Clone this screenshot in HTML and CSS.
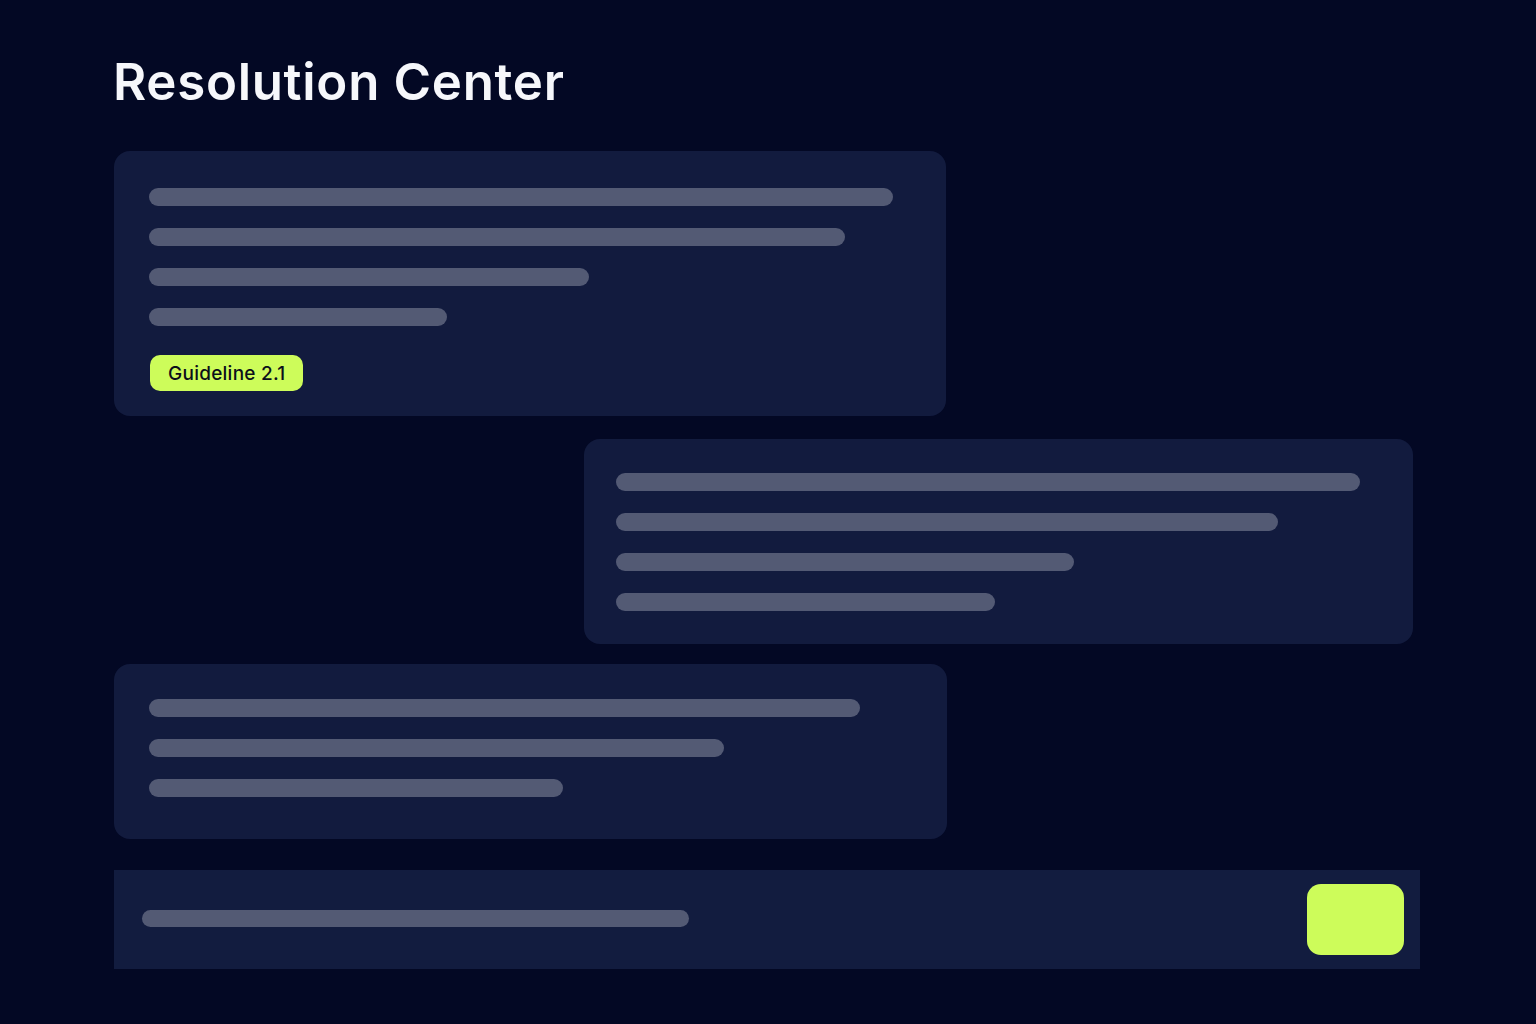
FILE: index.html
```html
<!DOCTYPE html>
<html>
<head>
<meta charset="utf-8">
<link rel="stylesheet" href="styles.css">
</head>
<body>
<main class="page">
  <h1 class="title">Resolution Center</h1>
  <section class="card card-a">
    <div class="bars">
      <div class="bar" style="width:744px"></div>
      <div class="bar" style="width:696px"></div>
      <div class="bar" style="width:440px"></div>
      <div class="bar" style="width:298px"></div>
    </div>
    <span class="badge">Guideline 2.1</span>
  </section>
  <section class="card card-b">
    <div class="bars">
      <div class="bar" style="width:744px"></div>
      <div class="bar" style="width:662px"></div>
      <div class="bar" style="width:458px"></div>
      <div class="bar" style="width:379px"></div>
    </div>
  </section>
  <section class="card card-c">
    <div class="bars">
      <div class="bar" style="width:711px"></div>
      <div class="bar" style="width:575px"></div>
      <div class="bar" style="width:414px"></div>
    </div>
  </section>
  <footer class="composer">
    <div class="bar bar-input" style="width:547px"></div>
    <button class="send" type="button" aria-label="Send"></button>
  </footer>
</main>
</body>
</html>
```
FILE: styles.css
```css
html, body {
  margin: 0;
  padding: 0;
  background: #030824;
  height: 100%;
}
body {
  font-family: Inter, "Noto Sans", sans-serif;
  color: #ffffff;
  overflow: hidden;
}
.page {
  width: 1306px;
  margin-left: 114px;
  padding-top: 52px;
  display: flex;
  flex-direction: column;
}
.title {
  margin: 0 0 0 -1px;
  font-size: 51px;
  font-weight: 600;
  line-height: 60px;
  letter-spacing: 0.7px;
  color: #f6f7fb;
}
.card {
  background: #121b3e;
  border-radius: 16px;
  box-sizing: border-box;
  display: flex;
  flex-direction: column;
}
.card-a {
  margin-top: 39px;
  width: 832px;
  height: 265px;
  padding: 37px 35px 0;
}
.card-b {
  margin-top: 23px;
  margin-left: 470px;
  width: 829px;
  height: 205px;
  padding: 34px 32px 0;
}
.card-c {
  margin-top: 20px;
  width: 833px;
  height: 175px;
  padding: 35px 35px 0;
}
.bars {
  display: flex;
  flex-direction: column;
  gap: 22px;
}
.bar {
  height: 18px;
  border-radius: 9px;
  background: #535a74;
}
.badge {
  align-self: flex-start;
  margin-top: 29px;
  margin-left: 1px;
  height: 36px;
  padding: 0 17px 0 18px;
  border-radius: 10px;
  background: #cdfc5a;
  color: #0b0f1a;
  font-size: 19px;
  font-weight: 500;
  line-height: 37px;
  letter-spacing: 0.25px;
}
.composer {
  margin-top: 31px;
  height: 99px;
  background: #121c3f;
  display: flex;
  align-items: center;
  justify-content: space-between;
  padding: 0 16px 0 28px;
  box-sizing: border-box;
}
.bar-input {
  height: 17px;
  border-radius: 8.5px;
  margin-top: -3px;
}
.send {
  width: 97px;
  height: 71px;
  border: none;
  border-radius: 14px;
  background: #cdfc5a;
  padding: 0;
  margin-top: -1px;
}
```
